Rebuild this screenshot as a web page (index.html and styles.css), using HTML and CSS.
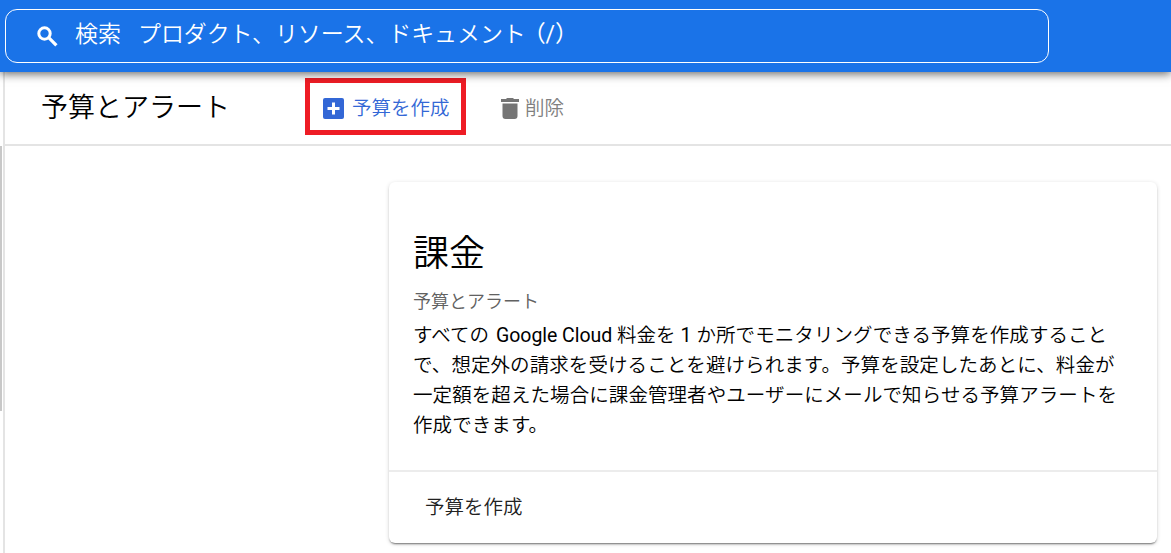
FILE: index.html
```html
<!DOCTYPE html>
<html lang="ja">
<head>
<meta charset="utf-8">
<title>予算とアラート</title>
<link rel="stylesheet" href="styles.css">
</head>
<body>
<header class="topbar">
  <div class="search">
    <svg class="search-icon" viewBox="0 0 22 22"><circle cx="7.5" cy="7.5" r="5.7" fill="none" stroke="#fff" stroke-width="3"/><path d="M11.7 11.7L19.4 19.4" stroke="#fff" stroke-width="3.2"/></svg>
    <span class="search-label">検索</span>
    <span class="search-hint">プロダクト、リソース、ドキュメント<span class="shortcut">（/）</span></span>
  </div>
</header>
<div class="shell">
  <aside class="rail"><div class="rail-thumb"></div></aside>
  <main class="main">
    <div class="toolbar">
      <h1 class="title">予算とアラート</h1>
      <button class="create">
        <svg class="create-icon" viewBox="0 0 21 21"><rect width="21" height="21" rx="2" fill="#3367d6"/><path d="M10.5 4.5v12M4.5 10.5h12" stroke="#fff" stroke-width="3"/></svg>
        <span>予算を作成</span>
      </button>
      <button class="delete">
        <svg class="delete-icon" viewBox="0 0 18 21"><path d="M0 1h5l1-1h6l1 1h5v3H0zM1.5 5.5h15V18a3 3 0 0 1-3 3h-9a3 3 0 0 1-3-3z" fill="#757575"/></svg>
        <span>削除</span>
      </button>
    </div>
    <section class="card">
      <div class="card-body">
        <h2 class="card-title">課金</h2>
        <div class="card-subtitle">予算とアラート</div>
        <p class="card-text">すべての <span class="latin product">Google Cloud</span> 料金を <span class="latin">1</span> か所でモニタリングできる予算を作成すること<br>で、想定外の請求を受けることを避けられます。予算を設定したあとに、料金が<br>一定額を超えた場合に課金管理者やユーザーにメールで知らせる予算アラートを<br>作成できます。</p>
      </div>
      <div class="card-actions"><span>予算を作成</span></div>
    </section>
  </main>
</div>
</body>
</html>
```
FILE: styles.css
```css
* { box-sizing: border-box; }
body {
  margin: 0;
  height: 553px;
  overflow: hidden;
  display: flex;
  flex-direction: column;
  background: #fff;
  color: #000;
  font-family: Roboto, "Noto Sans CJK JP", sans-serif;
  font-weight: 350;
}
h1, h2, p { margin: 0; font-weight: 350; }
button { margin: 0; background: none; border: 0; font: inherit; }
.topbar {
  position: relative;
  z-index: 1;
  flex: none;
  height: 72px;
  padding: 9px 0 0 5px;
  background: #1a73e8;
  box-shadow: 0 2px 9px rgba(0, 0, 0, .6);
}
.search {
  display: flex;
  align-items: center;
  width: 1044px;
  height: 54px;
  padding: 0 0 3px 31px;
  border: 1px solid #fff;
  border-radius: 12px;
  color: #fff;
  font-size: 23px;
  line-height: 30px;
  white-space: nowrap;
}
.search-icon { width: 22px; height: 22px; margin: 4px 16px 0 0; }
.search-label { width: 63px; }
.search-hint { letter-spacing: -.1px; }
.shortcut { margin-left: -3px; font-weight: 400; }
.shell { flex: 1; display: flex; min-height: 0; }
.rail {
  flex: none;
  width: 5px;
  padding-top: 74px;
  border-right: 2px solid #e4e4e4;
}
.rail-thumb { width: 2px; height: 265px; background: #c8c8c8; }
.main { flex: 1; min-width: 0; }
.toolbar {
  display: flex;
  align-items: flex-start;
  height: 74px;
  padding: 6px 0 0 36px;
  border-bottom: 2px solid #e4e4e4;
  white-space: nowrap;
}
.title { width: 264px; padding-top: 10px; font-size: 27px; line-height: 40px; }
.create {
  display: flex;
  align-items: center;
  width: 161px;
  height: 57px;
  padding: 0 0 0 13px;
  border: 5px solid #ee1c25;
  color: #3367d6;
  font-size: 19.5px;
}
.create-icon { width: 21px; height: 21px; margin: 3px 8px 0 0; }
.delete {
  display: flex;
  align-items: center;
  height: 57px;
  margin-left: 35px;
  padding: 0;
  color: #808080;
  font-size: 19.5px;
}
.delete-icon { width: 18px; height: 21px; margin: 3px 6px 0 0; }
.card {
  width: 768px;
  height: 361px;
  margin: 36px 0 0 384px;
  border-radius: 6px;
  box-shadow: 0 2px 2px -1px rgba(0, 0, 0, .5), 0 1px 4px rgba(0, 0, 0, .16);
}
.card-body { height: 290px; padding: 47px 0 0 24px; border-bottom: 2px solid #ececec; }
.card-title { font-size: 36px; line-height: 50px; }
.card-subtitle { margin-top: 9px; font-size: 18px; line-height: 28px; color: #616161; }
.card-text { margin-top: 5px; font-size: 19.5px; line-height: 30px; letter-spacing: .08px; white-space: nowrap; }
.latin { font-weight: 400; }
.product { margin-left: 2px; letter-spacing: -.05px; }
.card-actions { height: 71px; padding: 21px 0 0 36px; font-size: 19.5px; line-height: 30px; color: #212121; }
```
